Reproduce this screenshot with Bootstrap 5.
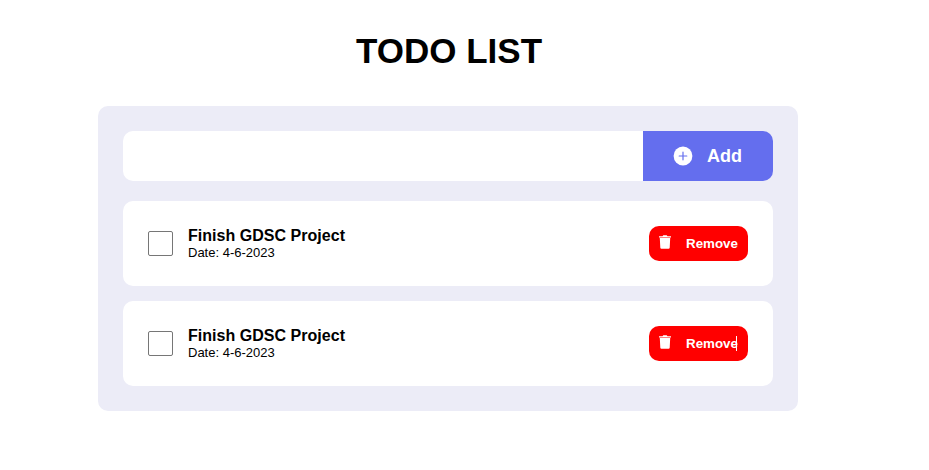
<!DOCTYPE html>
<html lang="en">
<head>
<meta charset="utf-8">
<meta name="viewport" content="width=device-width, initial-scale=1">
<title>Todo List</title>
<link href="https://cdn.jsdelivr.net/npm/bootstrap@5.3.0/dist/css/bootstrap.min.css" rel="stylesheet">
<style>
body { font-family: "Liberation Sans", Arial, sans-serif; color: #000; line-height: normal; }
.todo-app { width: 700px; margin-left: 98px; padding-top: 31px; }
.todo-title { font-size: 35px; line-height: 40px; margin: 0 0 35px 2px; }
.todo-panel { background: #ececf7; border-radius: 10px; padding: 25px; }
.todo-entry { height: 50px; margin-bottom: 20px; }
.todo-entry .form-control { border-radius: 10px 0 0 10px; }
.todo-add { width: 130px; border-radius: 0 10px 10px 0; background: #646eee; color: #fff; font-size: 18px; gap: 14px; padding: 0 0 0 30px; }
.todo-add:hover { background: #555fe0; color: #fff; }
.todo-items { gap: 15px; }
.todo-item { height: 85px; padding: 0 25px; border-radius: 10px; }
.todo-item .form-check-input { width: 25px; height: 25px; border: 1px solid #767676; border-radius: 2px; margin: 0 15px 0 0; }
.todo-name { font-size: 16px; line-height: 18px; letter-spacing: .03px; }
.todo-date { font-size: 13px; line-height: 15px; }
.todo-remove { width: 99px; height: 35px; background: #f00; color: #fff; border-radius: 10px; font-size: 13.333px; line-height: 15px; padding: 0 0 0 9px; gap: 14px; }
.todo-remove:hover { background: #d00; color: #fff; }
.todo-remove svg { margin-bottom: 3px; }
.text-caret { width: 1px; height: 15px; background: #fff; right: 11px; top: 10px; }
</style>
</head>
<body class="bg-white">
<main class="todo-app">
  <h1 class="todo-title fw-bold text-center">TODO LIST</h1>
  <section class="todo-panel">
    <form class="todo-entry d-flex">
      <input type="text" class="form-control border-0 flex-grow-1" aria-label="New task">
      <button type="button" class="todo-add btn border-0 fw-bold d-flex align-items-center flex-shrink-0">
        <svg width="20" height="20" viewBox="0 0 20 20" aria-hidden="true"><circle cx="10" cy="10" r="9.4" fill="#fff"/><path d="M10 6.2v7.6M6.2 10h7.6" stroke="#646eee" stroke-width="1.2" stroke-linecap="round"/></svg>
        <span>Add</span>
      </button>
    </form>
    <div class="todo-items d-flex flex-column">
      <article class="todo-item bg-white d-flex align-items-center">
        <input class="form-check-input flex-shrink-0" type="checkbox" aria-label="Done">
        <div class="flex-grow-1">
          <div class="todo-name fw-bold">Finish GDSC Project</div>
          <div class="todo-date">Date: 4-6-2023</div>
        </div>
        <button type="button" class="todo-remove btn border-0 fw-bold d-flex align-items-center">
          <svg width="14" height="14" viewBox="0 0 14 14" aria-hidden="true"><path d="M1 1.2h3.5l.8-.9h3.4l.8.9H13v1.4H1zM1.8 3.1h10.4l-.5 9.7q-.1 1-1.1 1H3.4q-1 0-1.1-1z" fill="#fff"/></svg>
          <span>Remove</span>
        </button>
      </article>
      <article class="todo-item bg-white d-flex align-items-center">
        <input class="form-check-input flex-shrink-0" type="checkbox" aria-label="Done">
        <div class="flex-grow-1">
          <div class="todo-name fw-bold">Finish GDSC Project</div>
          <div class="todo-date">Date: 4-6-2023</div>
        </div>
        <button type="button" class="todo-remove btn border-0 fw-bold d-flex align-items-center position-relative">
          <svg width="14" height="14" viewBox="0 0 14 14" aria-hidden="true"><path d="M1 1.2h3.5l.8-.9h3.4l.8.9H13v1.4H1zM1.8 3.1h10.4l-.5 9.7q-.1 1-1.1 1H3.4q-1 0-1.1-1z" fill="#fff"/></svg>
          <span>Remove</span>
          <span class="text-caret position-absolute"></span>
        </button>
      </article>
    </div>
  </section>
</main>
<script src="https://cdn.jsdelivr.net/npm/bootstrap@5.3.0/dist/js/bootstrap.bundle.min.js"></script>
</body>
</html>
